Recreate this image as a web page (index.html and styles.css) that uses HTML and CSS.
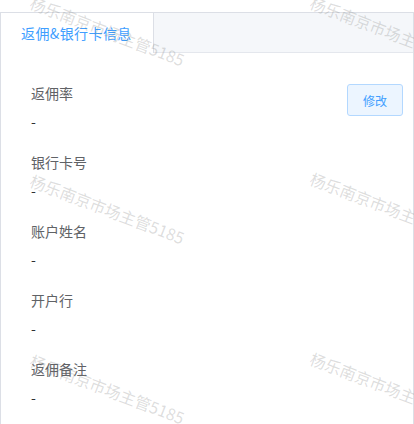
FILE: index.html
```html
<!DOCTYPE html>
<html lang="zh-CN">
<head>
  <meta charset="UTF-8">
  <meta name="viewport" content="width=device-width, initial-scale=1.0">
  <title>返佣&amp;银行卡信息</title>
  <link rel="stylesheet" href="styles.css">
</head>
<body>

  <div class="card">
    <div class="tabs-header">
      <div class="tab active">返佣&amp;银行卡信息</div>
    </div>

    <div class="tabs-content">
      <div class="info-list">
        <div class="info-item">
          <div class="info-label">返佣率</div>
          <div class="info-value">-</div>
        </div>
        <div class="info-item">
          <div class="info-label">银行卡号</div>
          <div class="info-value">-</div>
        </div>
        <div class="info-item">
          <div class="info-label">账户姓名</div>
          <div class="info-value">-</div>
        </div>
        <div class="info-item">
          <div class="info-label">开户行</div>
          <div class="info-value">-</div>
        </div>
        <div class="info-item">
          <div class="info-label">返佣备注</div>
          <div class="info-value">-</div>
        </div>
      </div>

      <button class="btn-edit">修改</button>
    </div>
  </div>

  <!-- 水印 -->
  <div class="watermark">
    <span class="wm wm-1">杨乐南京市场主管5185</span>
    <span class="wm wm-2">杨乐南京市场主管5185</span>
    <span class="wm wm-3">杨乐南京市场主管5185</span>
    <span class="wm wm-4">杨乐南京市场主管5185</span>
    <span class="wm wm-5">杨乐南京市场主管5185</span>
    <span class="wm wm-6">杨乐南京市场主管5185</span>
  </div>

</body>
</html>
```

FILE: styles.css
```css
* {
  box-sizing: border-box;
  margin: 0;
  padding: 0;
}

body {
  background: #fff;
  font-family: "Noto Sans CJK SC", "Noto Sans", sans-serif;
  font-size: 14px;
  color: #606266;
  height: 424px;
  overflow: hidden;
  position: relative;
}

.card {
  margin-top: 12px;
  border: 1px solid #dcdfe6;
  border-bottom: none;
  height: 420px;
}

.tabs-header {
  display: flex;
  height: 40px;
  background: #f5f7fa;
  border-bottom: 1px solid #e4e7ed;
}

.tab {
  padding: 0 20px;
  line-height: 40px;
  height: 40px;
  color: #909399;
  border-right: 1px solid #dcdfe6;
}

.tab.active {
  background: #fff;
  color: #409eff;
  width: 153px;
  letter-spacing: 0.4px;
}

.tabs-content {
  display: flex;
  justify-content: space-between;
  align-items: flex-start;
  padding: 30px 10px 0 30px;
}

.info-item {
  margin-bottom: 21px;
}

.info-label {
  line-height: 20px;
  color: #606266;
}

.info-value {
  margin-top: 8px;
  line-height: 20px;
  color: #303133;
}

.btn-edit {
  width: 56px;
  height: 32px;
  margin-top: 1px;
  background: #ecf5ff;
  border: 1px solid #b3d8ff;
  border-radius: 3px;
  color: #409eff;
  font-family: inherit;
  font-size: 12px;
  cursor: pointer;
}

.watermark {
  position: absolute;
  top: 0;
  left: 0;
  width: 100%;
  height: 100%;
  pointer-events: none;
  overflow: hidden;
}

.wm {
  position: absolute;
  font-size: 16px;
  line-height: 1;
  white-space: nowrap;
  color: rgba(120, 120, 120, 0.25);
  transform-origin: left top;
  transform: rotate(21deg);
}

.wm-1 { left: 34px; top: -6px; }
.wm-2 { left: 314px; top: -6px; }
.wm-3 { left: 34px; top: 172px; }
.wm-4 { left: 314px; top: 170px; }
.wm-5 { left: 34px; top: 352px; }
.wm-6 { left: 314px; top: 350px; }
```
